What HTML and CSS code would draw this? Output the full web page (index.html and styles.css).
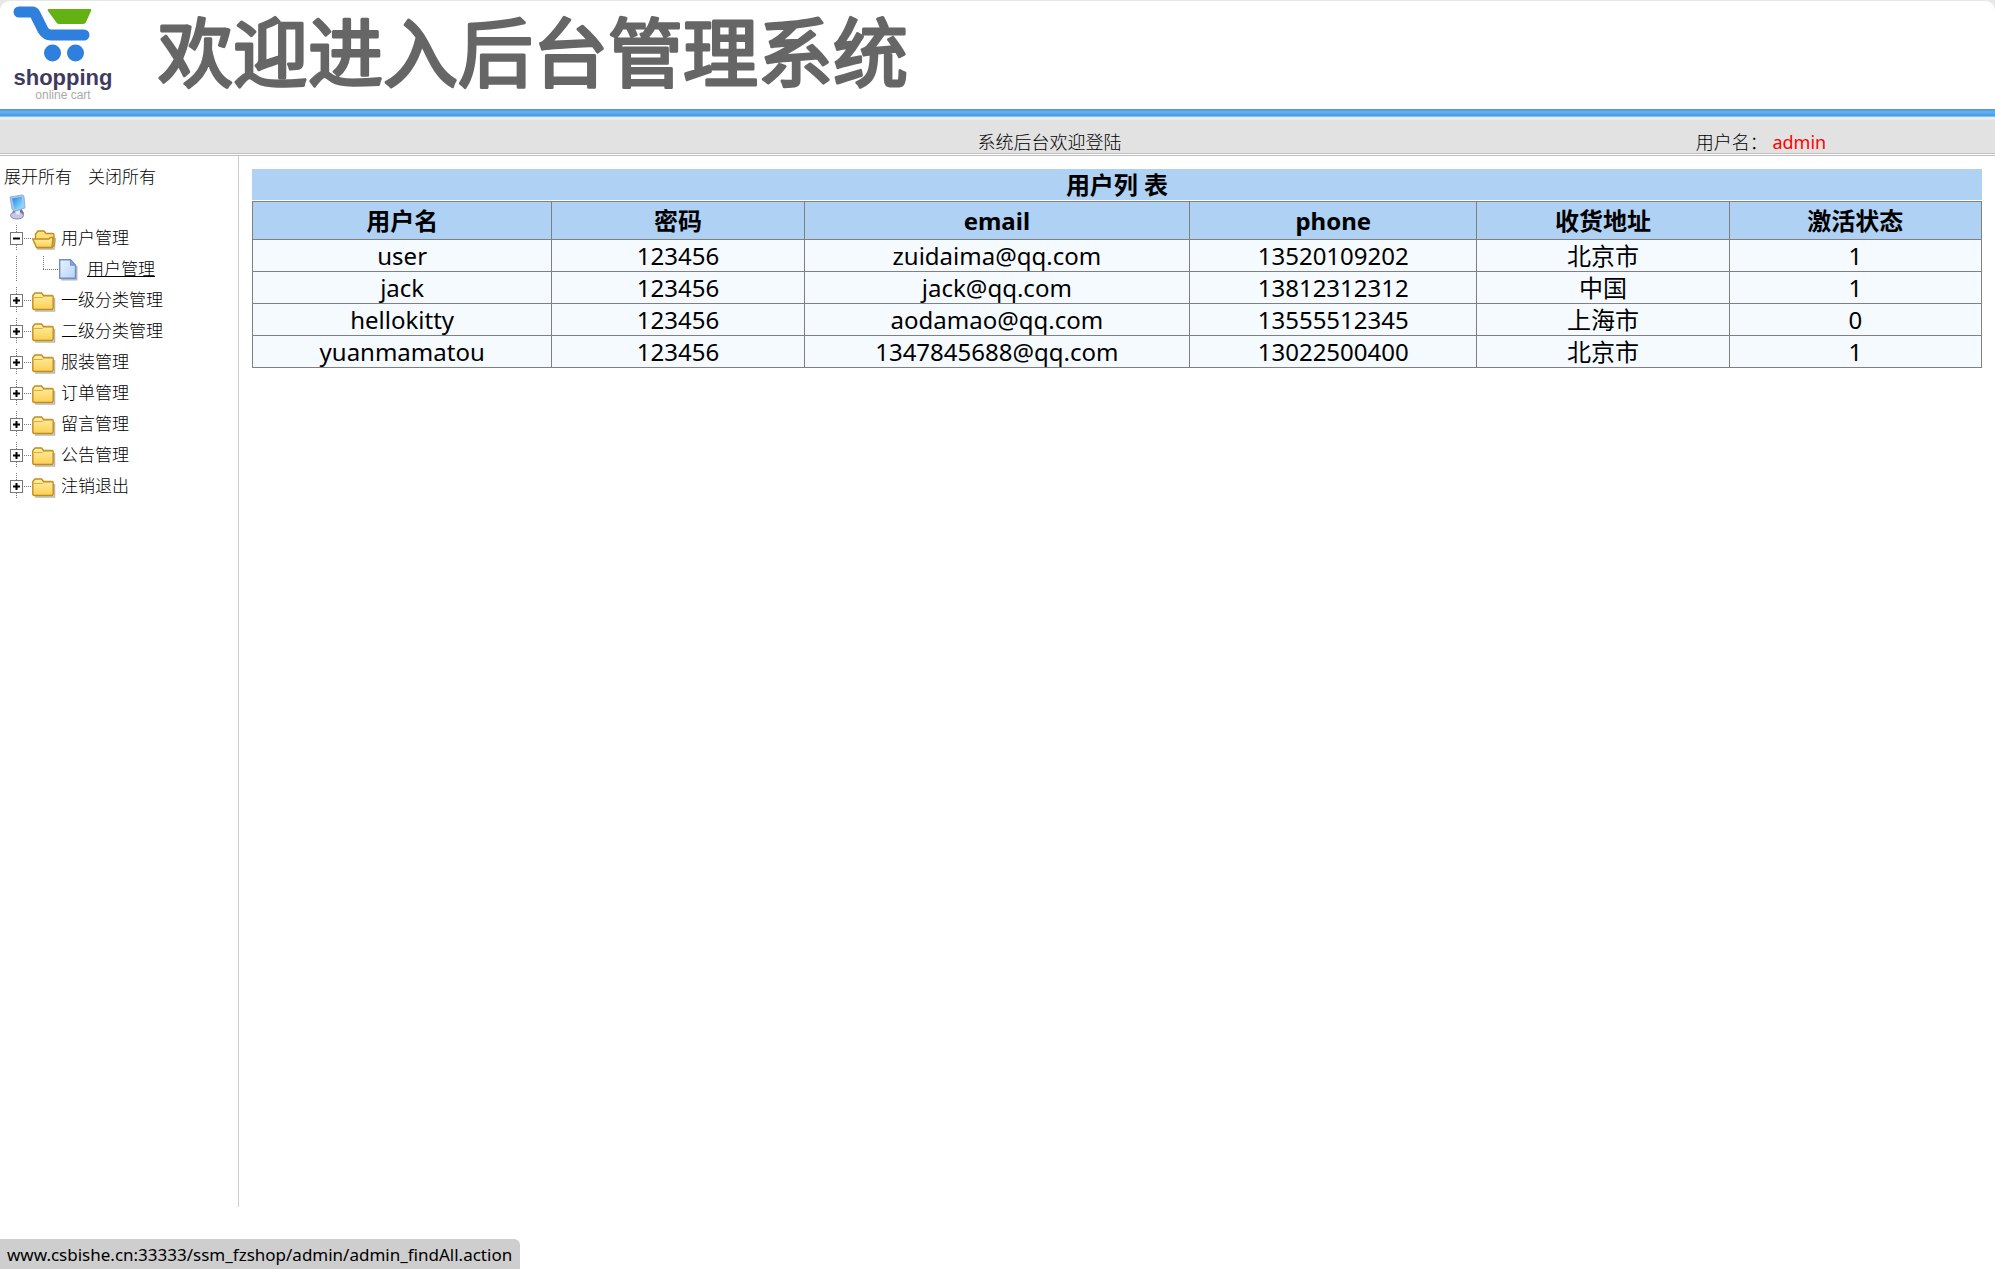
FILE: index.html
```html
<!DOCTYPE html>
<html lang="zh-CN">

<head>
    <meta charset="UTF-8">
    <meta name="viewport" content="width=device-width, initial-scale=1.0">
    <title>后台管理系统</title>
    <link rel="stylesheet" href="styles.css">
</head>

<body>
    <!-- Shared icons -->
    <svg class="sprite" width="0" height="0" aria-hidden="true">
        <defs>
            <linearGradient id="folderFill" x1="0" y1="0" x2="0" y2="1">
                <stop offset="0" stop-color="#fff0a8" />
                <stop offset="1" stop-color="#fbcf52" />
            </linearGradient>
            <linearGradient id="pageFill" x1="0" y1="0" x2="1" y2="1">
                <stop offset="0" stop-color="#eaf3ff" />
                <stop offset="1" stop-color="#b4d2fb" />
            </linearGradient>
            <linearGradient id="screenFill" x1="0" y1="0" x2="1" y2="1">
                <stop offset="0" stop-color="#2f7fe0" />
                <stop offset="1" stop-color="#8ff0ff" />
            </linearGradient>
        </defs>
        <symbol id="plus" viewBox="0 0 26 26">
            <path d="M10.5 0v7M10.5 20v6M18 13.5h8" stroke="#777" stroke-dasharray="1 1" />
            <rect x="4.5" y="7.5" width="12" height="12" fill="#fff" stroke="#777" />
            <path d="M7 13.5h7M10.5 10v7" stroke="#000" stroke-width="2" />
        </symbol>
        <symbol id="minus" viewBox="0 0 26 26">
            <path d="M10.5 0v7M10.5 20v6M18 13.5h8" stroke="#777" stroke-dasharray="1 1" />
            <rect x="4.5" y="7.5" width="12" height="12" fill="#fff" stroke="#777" />
            <path d="M7 13.5h7" stroke="#000" stroke-width="2" />
        </symbol>
        <symbol id="line" viewBox="0 0 26 26">
            <path d="M10.5 0v26" stroke="#777" stroke-dasharray="1 1" />
        </symbol>
        <symbol id="join" viewBox="0 0 26 26">
            <path d="M11.5 0v13M11 13.5h15" stroke="#777" stroke-dasharray="1 1" fill="none" />
        </symbol>
        <symbol id="folder" viewBox="0 0 26 26">
            <path d="M3 24h19.500V11" stroke="#888" stroke-width="1.500" fill="none" opacity=".6" />
            <path d="M.8 21V8.500L3 6h6.500l2 2.500H20q1.200 0 1.200 1.200V21q0 1.500-1.500 1.500H2.300Q.8 22.500.8 21z" fill="url(#folderFill)" stroke="#c08c1e" stroke-width="1.400" />
            <path d="M1.500 10.500h9l1.500-1.300h8.500" stroke="#d9ae3e" fill="none" />
        </symbol>
        <symbol id="folder-open" viewBox="0 0 26 26">
            <path d="M5 24h17l1.500-11" stroke="#888" stroke-width="1.500" fill="none" opacity=".6" />
            <path d="M3.500 14V9L6 6h6l2 2.500h6.500q1.500 0 1.500 1.500V20.500l-2 2H5z" fill="#ffe07a" stroke="#c08c1e" stroke-width="1.400" />
            <path d="M.8 14h16l1.700-1.500H21l-1 10H4.500z" fill="url(#folderFill)" stroke="#c08c1e" stroke-width="1.400" />
        </symbol>
        <symbol id="page" viewBox="0 0 26 26">
            <path d="M3 23.500h15.500V10" stroke="#888" stroke-width="2" fill="none" opacity=".6" />
            <path d="M1.700 3.700h10.800l5 5.500v13.100H1.700z" fill="url(#pageFill)" stroke="#6f8fca" stroke-width="1.400" />
            <path d="M12.500 3.700v5.500h5z" fill="#86a6de" stroke="#6f8fca" />
        </symbol>
        <symbol id="computer" viewBox="0 0 26 26">
            <path d="M8 15l7-1 3 5-1 4H8l-2-4z" fill="#6f72a0" />
            <ellipse cx="11" cy="21.500" rx="6.500" ry="3.500" fill="#c5c7e4" stroke="#8587b0" />
            <path d="M9 17l5-1v4q-2 1-4 0z" fill="#e6e7f5" />
            <path d="M4 3l12-2q2 0 2 2l1 11-10 3q-2 0-3-2z" fill="#a9c8f0" stroke="#8fb0dc" />
            <path d="M6 4.500l10-1.800.9 10.300-8.400 2.500z" fill="url(#screenFill)" />
        </symbol>
    </svg>

    <header class="banner">
        <svg class="logo" viewBox="0 0 110 104" role="img" aria-label="shopping online cart">
            <path d="M9 11h13q2 0 3 2l8 16q3 5 8 5h33" fill="none" stroke="#2f7fdc" stroke-width="11" stroke-linecap="round" stroke-linejoin="round" />
            <path d="M39 8h41q2 0 1 2l-5 11q-1 2-3 2H49q-2 0-3-2l-8-11q-1-2 1-2z" fill="#63b113" />
            <circle cx="42.500" cy="52" r="8.500" fill="#2f7fdc" />
            <circle cx="65.500" cy="52" r="8.500" fill="#2f7fdc" />
            <text class="logo-name" x="53" y="84" text-anchor="middle">shopping</text>
            <text class="logo-sub" x="53" y="98" text-anchor="middle">online cart</text>
        </svg>
        <h1>
            <svg class="title" viewBox="0 0 760 108">
                <text x="4" y="80">欢迎进入后台管理系统</text>
            </svg>
        </h1>
    </header>

    <div class="topbar">
        <span class="welcome">系统后台欢迎登陆</span>
        <span class="user">用户名： <span class="user-name">admin</span></span>
    </div>

    <div class="layout">
        <!-- Menu tree -->
        <nav class="sidebar">
            <div class="tree-actions">
                <a href="#">展开所有</a>
                <a href="#">关闭所有</a>
            </div>
            <div class="tree-root"><svg class="icon"><use href="#computer" /></svg></div>
            <ul class="tree">
                <li><svg class="icon"><use href="#minus" /></svg><svg class="icon"><use href="#folder-open" /></svg><a href="#">用户管理</a></li>
                <li><svg class="icon"><use href="#line" /></svg><svg class="icon"><use href="#join" /></svg><svg class="icon"><use href="#page" /></svg><a class="current" href="#">用户管理</a></li>
                <li><svg class="icon"><use href="#plus" /></svg><svg class="icon"><use href="#folder" /></svg><a href="#">一级分类管理</a></li>
                <li><svg class="icon"><use href="#plus" /></svg><svg class="icon"><use href="#folder" /></svg><a href="#">二级分类管理</a></li>
                <li><svg class="icon"><use href="#plus" /></svg><svg class="icon"><use href="#folder" /></svg><a href="#">服装管理</a></li>
                <li><svg class="icon"><use href="#plus" /></svg><svg class="icon"><use href="#folder" /></svg><a href="#">订单管理</a></li>
                <li><svg class="icon"><use href="#plus" /></svg><svg class="icon"><use href="#folder" /></svg><a href="#">留言管理</a></li>
                <li><svg class="icon"><use href="#plus" /></svg><svg class="icon"><use href="#folder" /></svg><a href="#">公告管理</a></li>
                <li><svg class="icon"><use href="#plus" /></svg><svg class="icon"><use href="#folder" /></svg><a href="#">注销退出</a></li>
            </ul>
        </nav>

        <!-- User list -->
        <main class="content">
            <table class="users">
                <caption>用户列 表</caption>
                <colgroup>
                    <col class="col-name">
                    <col class="col-password">
                    <col class="col-email">
                    <col class="col-phone">
                    <col class="col-address">
                    <col class="col-state">
                </colgroup>
                <thead>
                    <tr>
                        <th>用户名</th>
                        <th>密码</th>
                        <th>email</th>
                        <th>phone</th>
                        <th>收货地址</th>
                        <th>激活状态</th>
                    </tr>
                </thead>
                <tbody>
                    <tr>
                        <td>user</td>
                        <td>123456</td>
                        <td>zuidaima@qq.com</td>
                        <td>13520109202</td>
                        <td>北京市</td>
                        <td>1</td>
                    </tr>
                    <tr>
                        <td>jack</td>
                        <td>123456</td>
                        <td>jack@qq.com</td>
                        <td>13812312312</td>
                        <td>中国</td>
                        <td>1</td>
                    </tr>
                    <tr>
                        <td>hellokitty</td>
                        <td>123456</td>
                        <td>aodamao@qq.com</td>
                        <td>13555512345</td>
                        <td>上海市</td>
                        <td>0</td>
                    </tr>
                    <tr>
                        <td>yuanmamatou</td>
                        <td>123456</td>
                        <td>1347845688@qq.com</td>
                        <td>13022500400</td>
                        <td>北京市</td>
                        <td>1</td>
                    </tr>
                </tbody>
            </table>
        </main>
    </div>

    <div class="link-status">www.csbishe.cn:33333/ssm_fzshop/admin/admin_findAll.action</div>
</body>

</html>
```

FILE: styles.css
```css
* {
    box-sizing: border-box;
}

html {
    background: #e8e8e8;
}

body {
    display: flex;
    flex-direction: column;
    height: 100vh;
    margin: 0;
    border-top: 1px solid #e8e8e8;
    border-radius: 10px 10px 0 0;
    background: #fff;
    color: #000;
    font-family: "Noto Sans", "Noto Sans CJK SC", sans-serif;
    font-size: 18px;
}

a {
    color: #000;
    text-decoration: none;
}

.sprite {
    position: absolute;
}

/* Header */
.banner {
    display: flex;
    align-items: flex-start;
    height: 108px;
    padding-left: 10px;
}

.logo {
    width: 110px;
    height: 104px;
}

.logo-name {
    fill: #3f3b60;
    font-family: "Liberation Sans", sans-serif;
    font-size: 22px;
    font-weight: bold;
}

.logo-sub {
    fill: #aaa;
    font-family: "Liberation Sans", sans-serif;
    font-size: 12px;
}

.banner h1 {
    margin: 0 0 0 34px;
}

.title {
    display: block;
    width: 760px;
    height: 108px;
    fill: #666;
    stroke: #666;
    stroke-width: 3px;
    stroke-linejoin: round;
    font-family: "Noto Sans CJK SC", sans-serif;
    font-size: 75px;
    font-weight: 400;
}

/* Blue strip on top of the grey bar */
.topbar {
    display: flex;
    align-items: flex-end;
    height: 47px;
    border-bottom: 3px double #c0c0c0;
    background: linear-gradient(#4a97dc 0, #6bb0ea 3px, #459fee 6px, #459fee 7px, #d0dfee 8px, #f2f2f2 9px, #f2f2f2 10px, #e2e2e2 11px);
    background-clip: padding-box;
    line-height: 22px;
}

.welcome {
    width: 36%;
    margin-left: 49%;
}

.layout {
    display: flex;
    flex: 1;
    margin-bottom: 62px;
}

.welcome,
.user,
.sidebar {
    font-weight: 300;
}

.user-name {
    color: #f00;
    font-weight: 400;
}

/* Sidebar */
.sidebar {
    width: 239px;
    border-right: 1px solid #ccc;
    font-size: 17px;
}

.tree-actions {
    display: flex;
    gap: 16px;
    padding: 9px 4px 0;
    line-height: 24px;
}

.tree-root {
    padding: 5px 6px 0;
}

.icon {
    display: block;
    width: 26px;
    height: 26px;
}

.tree {
    margin: 0;
    padding: 2px 0 0 6px;
    list-style: none;
}

.tree li {
    display: flex;
    align-items: center;
    height: 31px;
}

.tree a {
    margin-left: 3px;
    line-height: 24px;
}

.tree .current {
    text-decoration: underline;
}

/* Table */
.content {
    flex: 1;
    padding: 13px;
}

.users {
    width: 100%;
    border-collapse: collapse;
    table-layout: fixed;
    background: #f5fafe;
    font-size: 24px;
    line-height: 31px;
    text-align: center;
}

.users caption {
    margin-bottom: 1px;
    background: #afd1f3;
    font-weight: bold;
}

.users th,
.users td {
    padding: 0;
    border: 1px solid gray;
}

.users th {
    height: 38px;
    background: #afd1f3;
}

.col-name {
    width: 299px;
}

.col-password,
.col-address,
.col-state {
    width: 252px;
}

.col-email {
    width: 385px;
}

.col-phone {
    width: 287px;
}

/* Link address shown on hover */
.link-status {
    position: fixed;
    bottom: 0;
    left: 0;
    padding: 4px 8px 2px 7px;
    border-top-right-radius: 6px;
    background: #cecece;
    font-size: 17px;
    line-height: 24px;
}
```
